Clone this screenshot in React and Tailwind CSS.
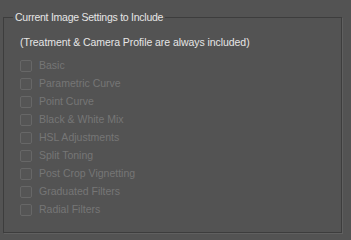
const items = [
  "Basic",
  "Parametric Curve",
  "Point Curve",
  "Black & White Mix",
  "HSL Adjustments",
  "Split Toning",
  "Post Crop Vignetting",
  "Graduated Filters",
  "Radial Filters",
];

export default function App() {
  return (
    <div className="w-[351px] h-[240px] bg-[#535353] pt-[11px] pl-[3px] font-['Liberation_Sans',sans-serif] text-[10.5px] overflow-hidden">
      <fieldset className="w-[339px] h-[222px] border border-[#3d3d3d] shadow-[1px_1px_0_#606060] pl-[16px]">
        <legend className="ml-[-7px] px-[2px] text-[#e6e6e6] leading-[13px] tracking-[-0.25px]">
          Current Image Settings to Include
        </legend>
        <p className="mt-[11px] text-[#e6e6e6] leading-[14px] tracking-[-0.06px]">
          (Treatment &amp; Camera Profile are always included)
        </p>
        <ul className="mt-[8px] flex flex-col">
          {items.map((label) => (
            <li key={label} className="flex items-center h-[18px]">
              <span className="w-[12px] h-[12px] rounded-[2px] border border-[#676767] bg-[#555555]" />
              <span className="ml-[7px] text-[#767676]">{label}</span>
            </li>
          ))}
        </ul>
      </fieldset>
    </div>
  );
}
